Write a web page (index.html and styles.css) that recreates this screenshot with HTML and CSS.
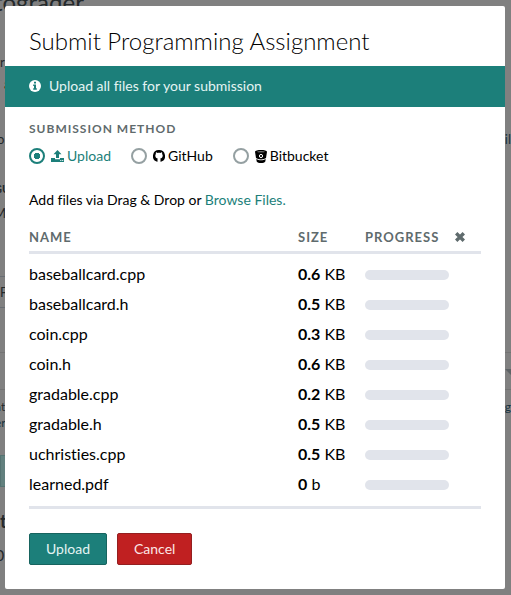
FILE: index.html
```html
<!DOCTYPE html>
<html lang="en">
<head>
<meta charset="utf-8">
<meta name="viewport" content="width=device-width, initial-scale=1">
<title>Submit Programming Assignment</title>
<link rel="stylesheet" href="styles.css">
</head>
<body>
<div class="backdrop" aria-hidden="true">
  <div class="under heading">tograder</div>
  <div class="under lead"><span>r</span></div>
  <div class="under inset"><span>a</span></div>
  <div class="under tall"><span>o</span><span class="link">il</span></div>
  <div class="under strong">GU</div>
  <div class="under big">M</div>
  <div class="under field">F</div>
  <div class="under rule"></div>
  <div class="under rule picker"><i class="caret"></i></div>
  <div class="under note"><span>at</span><span class="link">g</span></div>
  <div class="under note last"><span class="link">er.</span></div>
  <div class="under block"></div>
  <div class="under total">t</div>
  <div class="under score">0</div>
</div>
<main class="modal" role="dialog" aria-labelledby="title">
  <h1 class="modal-title" id="title">Submit Programming Assignment</h1>
  <div class="banner">
    <svg class="info" viewBox="0 0 12 12" aria-hidden="true"><circle cx="6" cy="6" r="6" fill="#fff"/><path d="M5 1.8h2v1.7H5zM4.2 4.6H7v3.7h.8v1.4H4.2V8.3H5V6h-.8z" fill="#1c7f7a"/></svg>
    <span>Upload all files for your submission</span>
  </div>
  <form class="modal-body">
    <fieldset class="methods">
      <legend>Submission Method</legend>
      <div class="options">
        <label class="option"><input type="radio" name="method" checked>
          <svg class="icon-upload" viewBox="0 0 13 12" aria-hidden="true"><path d="M6.5 0l4 4.200H8v3.900H5V4.200H2.500zM0 8h4v1.200h5V8h4v4H0z" fill="currentColor"/><path d="M9.300 10h1v1h-1zM11.200 10h1v1h-1z" fill="#fff"/></svg>
          <span>Upload</span></label>
        <label class="option"><input type="radio" name="method">
          <svg class="icon-github" viewBox="0 0 12 12" aria-hidden="true"><path fill="currentColor" d="M6 0a6 6 0 0 0-1.900 11.700c.3.050.4-.15.4-.3V9.300c0-.4.100-.7.300-.9C3.400 8.200 2.300 7.600 2.300 5.500c0-.7.200-1.200.6-1.600-.1-.4-.1-1 .1-1.600.5 0 1.100.200 1.700.6.800-.2 1.800-.2 2.600 0 .6-.4 1.200-.6 1.700-.6.200.6.200 1.200.1 1.600.4.400.6.900.6 1.600 0 2.100-1.100 2.700-2.500 2.900.2.200.3.500.3.900v2.100c0 .15.1.35.4.3A6 6 0 0 0 6 0z"/></svg>
          <span>GitHub</span></label>
        <label class="option"><input type="radio" name="method">
          <svg class="icon-bitbucket" viewBox="0 0 12 13" aria-hidden="true"><path d="M0 1.800C0 .6 3 0 6 0s6 .6 6 1.800L11 8c-1 .9-3 1.400-5 1.400S2 8.900 1 8zM1.300 9c1.400 1 3 1.300 4.700 1.300S9.300 10 10.700 9l-.4 2.400C9.500 12.500 8 13 6 13s-3.500-.5-4.300-1.600z" fill="currentColor"/><ellipse cx="6" cy="1.700" rx="3.800" ry=".5" fill="#999"/><circle cx="6" cy="6" r="1.600" fill="none" stroke="#fff"/></svg>
          <span>Bitbucket</span></label>
      </div>
    </fieldset>
    <p class="hint">Add files via Drag &amp; Drop or <a href="#">Browse Files.</a></p>
    <table class="files">
      <thead><tr><th class="col-name">Name</th><th class="col-size">Size</th><th class="col-progress">Progress</th><th class="col-remove"><svg class="cross" viewBox="0 0 10 10" role="img" aria-label="Remove"><path d="M1.200 1.200l7.600 7.600M8.800 1.200l-7.600 7.600" stroke="currentColor" stroke-width="3.400"/></svg></th></tr></thead>
      <tbody>
        <tr><td>baseballcard.cpp</td><td><b>0.6</b> KB</td><td><div class="bar"></div></td><td></td></tr>
        <tr><td>baseballcard.h</td><td><b>0.5</b> KB</td><td><div class="bar"></div></td><td></td></tr>
        <tr><td>coin.cpp</td><td><b>0.3</b> KB</td><td><div class="bar"></div></td><td></td></tr>
        <tr><td>coin.h</td><td><b>0.6</b> KB</td><td><div class="bar"></div></td><td></td></tr>
        <tr><td>gradable.cpp</td><td><b>0.2</b> KB</td><td><div class="bar"></div></td><td></td></tr>
        <tr><td>gradable.h</td><td><b>0.5</b> KB</td><td><div class="bar"></div></td><td></td></tr>
        <tr><td>uchristies.cpp</td><td><b>0.5</b> KB</td><td><div class="bar"></div></td><td></td></tr>
        <tr><td>learned.pdf</td><td><b>0</b> b</td><td><div class="bar"></div></td><td></td></tr>
      </tbody>
    </table>
    <div class="actions">
      <button type="button" class="btn">Upload</button>
      <button type="button" class="btn danger">Cancel</button>
    </div>
  </form>
</main>
</body>
</html>
```
FILE: styles.css
```css
* { box-sizing: border-box; }
body {
  margin: 0;
  padding: 6px 6px 6px 5px;
  background: #808080;
  color: #000;
  font-family: Lato, "Open Sans", sans-serif;
  font-size: 14px;
  font-variant-ligatures: none;
}

/* Dimmed page behind the dialog */
.backdrop {
  position: absolute;
  inset: 0;
  overflow: hidden;
  color: #24292b;
  font-size: 13px;
  line-height: 16px;
}
.under { display: flex; justify-content: space-between; }
.under .link { color: #17333f; }
.heading { height: 64px; margin: -10px 0 0 -6px; font-size: 24px; font-weight: 400; line-height: 24px; }
.lead { height: 22px; }
.inset { height: 55px; padding-left: 4px; color: #4b2f22; }
.tall { height: 50px; margin-left: -3px; }
.strong { height: 24px; margin-left: -6px; font-size: 11px; font-weight: 700; }
.big { height: 71px; margin-left: -6px; }
.field { width: 50%; height: 32px; border: 1px solid #686d73; border-left: 0; line-height: 30px; }
.rule { height: 45px; border-bottom: 1px solid #737373; }
.picker { height: 37px; justify-content: flex-end; }
.caret { width: 6px; height: 6px; margin-top: 16px; background: #5d6265; clip-path: polygon(0 0, 100% 0, 100% 100%); }
.note { height: 16px; margin-top: 9px; margin-left: -5px; font-size: 12px; }
.last { margin-top: 0; }
.block { width: 20px; height: 32px; margin-top: 24px; background: #62807e; border: 1px solid #547371; }
.total { margin: 24px 0 0; font-size: 18px; font-weight: 700; line-height: 20px; }
.score { margin: 14px 0 0 -5px; font-size: 16px; line-height: 20px; }

.modal { position: relative; background: #fff; border-radius: 2px; }
.modal-title {
  margin: 0;
  padding: 20px 24px 10px;
  font-size: 24px;
  font-weight: 300;
  line-height: 30px;
}
.banner {
  display: flex;
  align-items: center;
  gap: 8px;
  padding: 10px 24px 11px;
  background: #1c7f7a;
  color: #e4f4f3;
  line-height: 20px;
}
.info { width: 12px; height: 12px; }
.modal-body { padding: 12px 24px 24px; }

.methods { margin: 0; padding: 0; border: 0; }
.methods legend {
  padding: 0;
  color: #5f6b6d;
  font-size: 12px;
  font-weight: 700;
  letter-spacing: 1px;
  line-height: 20px;
  text-transform: uppercase;
}
.options { display: flex; gap: 20px; margin-top: 5px; }
.option { display: flex; align-items: center; line-height: 24px; }
.option input {
  appearance: none;
  width: 16px;
  height: 16px;
  margin: 0 6px 0 0;
  border: 2px solid #95a0a2;
  border-radius: 50%;
}
.option input:checked {
  border-color: #1c7f7a;
  background: radial-gradient(circle, #1c7f7a 3px, transparent 3px);
}
.option:has(input:checked) { color: #1c7f7a; }
.option svg { margin-right: 3px; }
.icon-upload { width: 13px; height: 12px; }
.icon-github { width: 12px; height: 12px; }
.icon-bitbucket { width: 12px; height: 13px; }

.hint { margin: 22px 0 13px; line-height: 20px; }
.hint a { color: #1c7f7a; text-decoration: none; }

.files { width: 100%; border-collapse: separate; border-spacing: 0; border-bottom: 3px solid #e1e4eb; table-layout: fixed; }
.files th, .files td { padding: 0; text-align: left; }
.files th {
  height: 31px;
  border-bottom: 3px solid #e1e4eb;
  color: #5f6b6d;
  font-size: 13px;
  letter-spacing: 1px;
  text-transform: uppercase;
}
.files td { height: 30px; font-size: 16px; line-height: 28px; vertical-align: top; }
.files tbody tr:first-child td { height: 36px; padding-top: 6px; }
.files tbody tr:last-child td { height: 36px; padding-bottom: 6px; }
.col-size { width: 67px; }
.col-progress { width: 90px; }
.col-remove { width: 26px; }
.cross { display: block; width: 10px; height: 10px; }
.bar { width: 84px; height: 10px; margin-top: 10px; border-radius: 5px; background: #e1e4eb; }

.actions { display: flex; gap: 10px; margin-top: 24px; }
.btn {
  padding: 5px 16px;
  border: 1px solid #17645f;
  border-radius: 2px;
  background: #1c7f7a;
  color: #e4f4f3;
  font: inherit;
  line-height: 20px;
}
.danger { border-color: #941f20; background: #c02021; color: #fbe6e6; }
```
